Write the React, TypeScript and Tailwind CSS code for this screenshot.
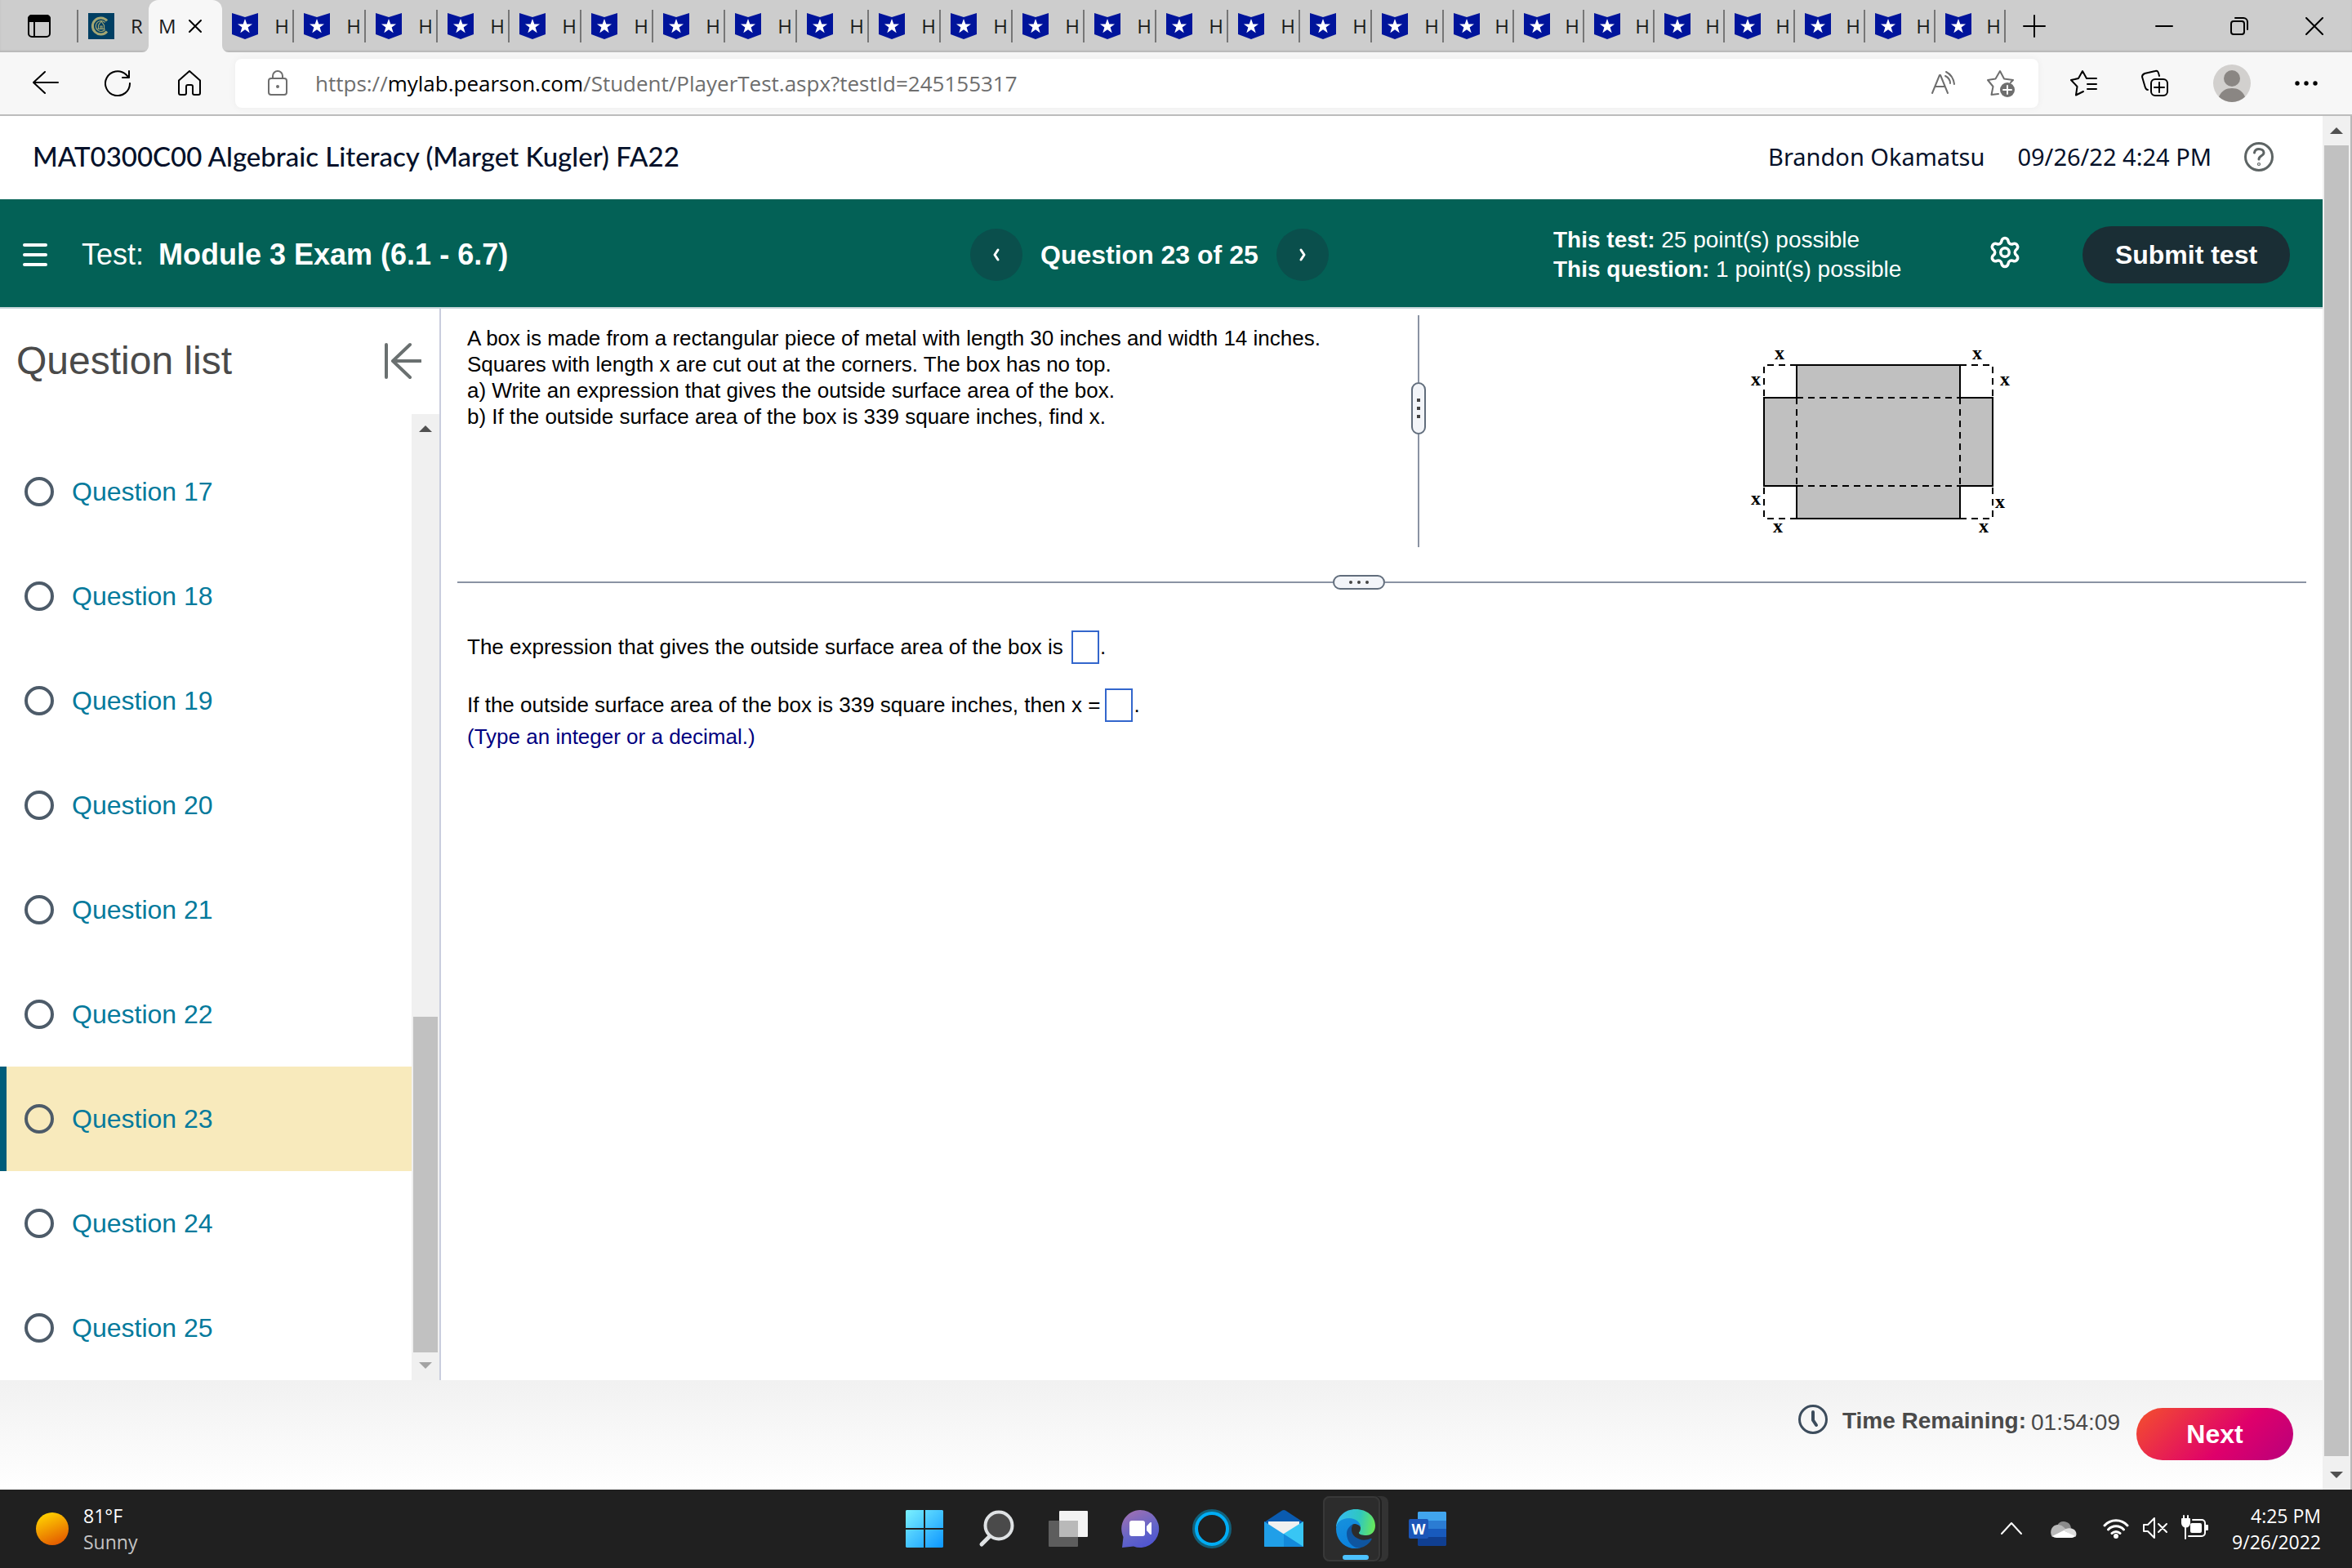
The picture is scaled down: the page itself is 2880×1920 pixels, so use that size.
import type { ReactNode } from "react";
import { Settings } from "lucide-react";

const NARROW_FROM = 17;
const homeworkTabs = Array.from({ length: 25 }, (_, i) => i);
const questions = [17, 18, 19, 20, 21, 22, 23, 24, 25];
const currentQuestion = 23;

function Line({
  children,
  size = 32,
  className = "",
  width = 2,
}: {
  children: ReactNode;
  size?: number;
  className?: string;
  width?: number;
}) {
  return (
    <svg
      width={size}
      height={size}
      viewBox={`0 0 ${size} ${size}`}
      fill="none"
      stroke="currentColor"
      strokeWidth={width}
      strokeLinecap="round"
      strokeLinejoin="round"
      aria-hidden="true"
      className={`shrink-0 ${className}`}
    >
      {children}
    </svg>
  );
}

function StarBadge() {
  return (
    <svg width="32" height="32" viewBox="0 0 32 32" aria-hidden="true" className="shrink-0">
      <path d="M0 0l16 5L32 0v26l-16 6L0 26z" fill="#00149b" />
      <path
        d="M16 7l2.3 6.5h6.7l-5.4 4 2.1 6.8L16 20.3l-5.7 4 2.1-6.8-5.4-4h6.7z"
        fill="#fff"
      />
    </svg>
  );
}

function CollegeBadge() {
  return (
    <svg width="32" height="32" viewBox="0 0 32 32" aria-hidden="true" className="shrink-0">
      <rect width="32" height="32" fill="#003f63" />
      <g fill="none" stroke="#a3a673">
        <path d="M23 9.500A10 10 0 1 0 23 22.500" strokeWidth="3" />
        <path d="M20.500 11.500A6.500 6.500 0 1 0 20.500 20.500" strokeWidth="1.200" />
        <path d="M12.500 19v-4l3.500-5 3.500 5v4M15 19v-3h2v3M11.500 19.500h9" strokeWidth="1.200" />
      </g>
    </svg>
  );
}

function TabStrip() {
  return (
    <div className="flex h-16 items-center bg-[#cdcdcd] text-2xl text-[#1b1b1b] shadow-[inset_0_-2px_2px_rgba(0,0,0,0.1)]">
      <button type="button" aria-label="Tab actions" className="flex w-[94px] justify-center pl-0.5 text-black">
        <Line size={30}>
          <rect x="2" y="2" width="26" height="26" rx="4" />
          <path d="M2 9V6a4 4 0 0 1 4-4h18a4 4 0 0 1 4 4v3z" fill="currentColor" />
          <path d="M9 9v19" />
        </Line>
      </button>
      <span className="h-10 w-[2px] bg-[#767676]" />
      <button type="button" className="flex w-[86px] items-center gap-5 pl-3">
        <CollegeBadge />
        <span>R</span>
      </button>
      <div className="relative flex h-16 w-[90px] items-center gap-3.5 rounded-t-xl bg-[#f7f7f7] pl-3">
        <svg width="8" height="8" aria-hidden="true" className="absolute bottom-0 -left-2">
          <path d="M8 0v8H0a8 8 0 0 0 8-8z" fill="#f7f7f7" />
        </svg>
        <svg width="8" height="8" aria-hidden="true" className="absolute -right-2 bottom-0">
          <path d="M0 0v8h8a8 8 0 0 1-8-8z" fill="#f7f7f7" />
        </svg>
        <span>M</span>
        <button type="button" aria-label="Close tab" className="text-black">
          <Line size={18}>
            <path d="M2 2l14 14M16 2L2 16" />
          </Line>
        </button>
      </div>
      {homeworkTabs.map((i) => (
        <button
          type="button"
          key={i}
          className={
            i < NARROW_FROM
              ? "flex w-[88px] items-center justify-between pl-3"
              : "flex w-[86px] items-center justify-between pl-3"
          }
        >
          <StarBadge />
          <span className="flex items-center gap-1">
            <span>H</span>
            <span className="h-10 w-[2px] bg-[#767676]" />
          </span>
        </button>
      ))}
      <button type="button" aria-label="New tab" className="ml-5 text-black">
        <Line size={30}>
          <path d="M15 2v26M2 15h26" />
        </Line>
      </button>
      <div className="ml-auto flex items-center gap-[70px] pr-[35px] text-black">
        <button type="button" aria-label="Minimize">
          <Line size={22}>
            <path d="M1 11h20" />
          </Line>
        </button>
        <button type="button" aria-label="Restore">
          <Line size={22}>
            <rect x="1" y="5" width="16" height="16" rx="3" />
            <path d="M6 1h10a5 5 0 0 1 5 5v9" />
          </Line>
        </button>
        <button type="button" aria-label="Close">
          <Line size={22}>
            <path d="M1 1l20 20M21 1L1 21" />
          </Line>
        </button>
      </div>
    </div>
  );
}

function AddressRow() {
  return (
    <div className="flex h-[78px] items-center border-b-2 border-[#bcbcbc] bg-[#f7f7f7] text-black">
      <div className="flex w-72 items-center gap-14 pl-10">
        <button type="button" aria-label="Back">
          <Line>
            <path d="M31 15H1M15 2L1 15l14 13" />
          </Line>
        </button>
        <button type="button" aria-label="Refresh">
          <Line>
            <path d="M31 16A15 15 0 1 1 26 5l4 4M30 1v8h-8" />
          </Line>
        </button>
        <button type="button" aria-label="Home">
          <Line>
            <path d="M3 12.500L16 1l13 11.500V28a2 2 0 0 1-2 2h-5a2 2 0 0 1-2-2v-8a2 2 0 0 0-2-2h-4a2 2 0 0 0-2 2v8a2 2 0 0 1-2 2H5a2 2 0 0 1-2-2z" />
          </Line>
        </button>
      </div>
      <div className="flex h-[60px] flex-1 items-center rounded-lg bg-white px-[28px] text-[#6e6e6e] shadow-[0_0_10px_rgba(0,0,0,0.05)]">
        <button type="button" aria-label="Site information" className="pl-2">
          <Line size={32}>
            <rect x="5" y="10" width="22" height="20" rx="3" />
            <path d="M10 10V7a6 6 0 0 1 12 0v3" />
            <circle cx="16" cy="20" r="1" fill="currentColor" />
          </Line>
        </button>
        <div
          role="textbox"
          aria-label="Address"
          contentEditable
          suppressContentEditableWarning
          className="ml-[30px] flex-1 text-[26px] outline-none"
        >
          https://<span className="text-black">mylab.pearson.com</span>
          /Student/PlayerTest.aspx?testId=245155317
        </div>
        <div className="flex gap-9">
          <button type="button" aria-label="Read aloud">
            <Line>
              <path d="M2 28L11 6h1l9 22M6 20h11M19 2c6 3 9 8 10 15M18 7c4 2 6 5 6 9" />
            </Line>
          </button>
          <button type="button" aria-label="Add to favorites">
            <Line size={36}>
              <path d="M15 31l-8.500 1 2-10L2 14l9.500-1.500L17 3l5 9.500L33 14l-3 3" />
              <circle cx="26" cy="26" r="9" fill="currentColor" stroke="none" />
              <path d="M26 21v10M21 26h10" stroke="#fff" />
            </Line>
          </button>
        </div>
      </div>
      <div className="flex items-center gap-[54px] pr-[42px] pl-[38px]">
        <button type="button" aria-label="Favorites">
          <Line size={34}>
            <path d="M17 27l-9 4.500L9.500 21 2 13l9-2 5-9 5 9h12M22 18h11M22 24h11" />
          </Line>
        </button>
        <button type="button" aria-label="Collections">
          <Line size={34}>
            <path d="M8 25C6 25 5 23 4.500 21L1 9c0-2 1-3 3-4l13-3c3-1 4 1 5 6" />
            <rect x="12" y="12" width="20" height="20" rx="5" />
            <path d="M22 16v12M16 22h12" />
          </Line>
        </button>
        <button type="button" aria-label="Profile">
          <svg width="46" height="46" viewBox="0 0 46 46" aria-hidden="true">
            <circle cx="23" cy="23" r="23" fill="#d2d0ce" />
            <circle cx="23" cy="17" r="10" fill="#8a8683" />
            <path d="M7 39.500C10 32 16 29 23 29s13 3 16 10.500A23 23 0 0 1 7 39.500z" fill="#8a8683" />
          </svg>
        </button>
        <button type="button" aria-label="Settings and more">
          <svg width="28" height="6" viewBox="0 0 28 6" aria-hidden="true">
            <circle cx="3" cy="3" r="2.700" />
            <circle cx="14" cy="3" r="2.700" />
            <circle cx="25" cy="3" r="2.700" />
          </svg>
        </button>
      </div>
    </div>
  );
}

function CourseHeader() {
  return (
    <header className="flex h-[102px] items-center bg-white pr-[60px] pb-0.5 pl-10 text-[#05112a]">
      <h1 className="flex-1 font-[Lato] text-[33px] font-medium">
        MAT0300C00 Algebraic Literacy (Marget Kugler) FA22
      </h1>
      <div className="flex items-center gap-10 font-['Noto_Sans'] text-[29px]">
        <span>Brandon Okamatsu</span>
        <span>09/26/22 4:24 PM</span>
        <button type="button" aria-label="Help" className="text-[#5d6464]">
          <Line size={36} width={3}>
            <circle cx="18" cy="18" r="16.500" />
            <path d="M12.500 13c.5-3 3-4.500 5.500-4.500 3.500 0 6 2 6 4.500 0 4-6 3.500-6 8" />
            <circle cx="18" cy="27" r=".6" />
          </Line>
        </button>
      </div>
    </header>
  );
}

function TestBar() {
  return (
    <div className="flex h-[134px] items-center border-b-2 border-[#c7d5d9] bg-[#036156] pt-1 font-['Liberation_Sans'] text-white">
      <div className="flex w-[1188px] items-center pl-7">
        <button type="button" aria-label="Menu" className="flex w-[30px] flex-col gap-2">
          <span className="h-1 w-full rounded-xs bg-white" />
          <span className="h-1 w-full rounded-xs bg-white" />
          <span className="h-1 w-full rounded-xs bg-white" />
        </button>
        <h2 className="ml-[42px] text-4xl">
          Test: <strong className="ml-2">Module 3 Exam (6.1 - 6.7)</strong>
        </h2>
      </div>
      <nav aria-label="Questions" className="flex items-center gap-[22px]">
        <button
          type="button"
          aria-label="Previous question"
          className="flex size-16 items-center justify-center rounded-full bg-[#0a4f4c]"
        >
          <Line size={18} width={3}>
            <path d="M11 3L7 9l4 6" />
          </Line>
        </button>
        <strong className="text-[32px]">Question 23 of 25</strong>
        <button
          type="button"
          aria-label="Next question"
          className="flex size-16 items-center justify-center rounded-full bg-[#0a4f4c]"
        >
          <Line size={18} width={3}>
            <path d="M7 3l4 6-4 6" />
          </Line>
        </button>
      </nav>
      <div className="ml-auto flex items-center pr-10">
        <div className="w-[532px] text-[28px] leading-9">
          <p>
            <strong>This test:</strong> 25 point(s) possible
          </p>
          <p>
            <strong>This question:</strong> 1 point(s) possible
          </p>
        </div>
        <button type="button" aria-label="Settings" className="mr-[74px] mb-1.5">
          <Settings size={42} strokeWidth={2} />
        </button>
        <button type="button" className="h-[70px] w-[254px] rounded-full bg-[#1a2e35] text-[32px] font-bold">
          Submit test
        </button>
      </div>
    </div>
  );
}

function QuestionList() {
  return (
    <aside className="flex w-[540px] flex-col border-r-2 border-[#c9cdde]">
      <div className="flex h-[129px] items-center justify-between pr-[22px] pb-0.5 pl-5">
        <h2 className="text-5xl text-[#4a4a4a]">Question list</h2>
        <button type="button" aria-label="Collapse question list" className="text-[#6a7070]">
          <Line size={46} width={4}>
            <path d="M3 3v40M45 23H11M32 3L11 23l21 20" />
          </Line>
        </button>
      </div>
      <div className="flex flex-1">
        <ul className="flex-1 pt-[31px]">
          {questions.map((n) => (
            <li
              key={n}
              className={
                n === currentQuestion
                  ? "flex h-32 items-center gap-[22px] border-l-8 border-[#005d7a] bg-[#f8eabc] pl-[22px]"
                  : "flex h-32 items-center gap-[22px] pl-[30px]"
              }
            >
              <input
                id={`question-${n}`}
                type="radio"
                name="question"
                className="size-9 appearance-none rounded-full border-4 border-[#4d5b69]"
              />
              <label htmlFor={`question-${n}`} className="text-[32px] text-[#047a9c]">
                Question {n}
              </label>
            </li>
          ))}
        </ul>
        <div className="flex w-[34px] flex-col items-center bg-[#f0f0f0]">
          <svg width="16" height="8" aria-hidden="true" className="mt-3.5">
            <path d="M8 0l8 8H0z" fill="#505050" />
          </svg>
          <div className="flex-1" />
          <div className="h-[411px] w-[30px] bg-[#c1c1c1]" />
          <svg width="16" height="8" aria-hidden="true" className="mt-3 mb-3.5">
            <path d="M0 0h16L8 8z" fill="#a3a3a3" />
          </svg>
        </div>
      </div>
    </aside>
  );
}

// Open box net: the x squares at the corners are cut away.
function BoxNet() {
  return (
    <svg width="310" height="250" viewBox="0 0 310 250" role="img" aria-label="Sheet of metal with corner squares">
      <path d="M60 37h200v40h40v108h-40v40H60v-40H20V77h40z" fill="#c0c0c0" />
      <g fill="none" stroke="#000" strokeWidth="2">
        <path d="M60 77V37h200v40M260 77h40v108h-40M260 185v40H60v-40M60 185H20V77h40" />
        <path
          d="M60 37H20v40M260 37h40v40M60 225H20v-40M260 225h40v-40M60 77h200M60 77v108M260 77v108M60 185h200"
          strokeDasharray="8 6"
        />
      </g>
      <g fontFamily="Liberation Serif, serif" fontSize="24" fontWeight="bold" textAnchor="middle">
        <text x="39" y="30">x</text>
        <text x="281" y="30">x</text>
        <text x="10" y="62">x</text>
        <text x="315" y="62">x</text>
        <text x="10" y="208">x</text>
        <text x="309" y="212">x</text>
        <text x="37" y="242">x</text>
        <text x="289" y="242">x</text>
      </g>
    </svg>
  );
}

function Exercise() {
  return (
    <main className="flex flex-1 flex-col pt-2 pr-5 pl-5 text-[26px] text-black">
      <section className="flex h-[284px]">
        <div className="w-[1157px] pt-3 pl-3 leading-8">
          <p>A box is made from a rectangular piece of metal with length 30 inches and width 14 inches.</p>
          <p>Squares with length x are cut out at the corners. The box has no top.</p>
          <p>a) Write an expression that gives the outside surface area of the box.</p>
          <p>b) If the outside surface area of the box is 339 square inches, find x.</p>
        </div>
        <div className="flex w-[40px] flex-col items-center">
          <div className="h-[82px] w-[2px] bg-[#8a93a3]" />
          <button
            type="button"
            aria-label="Resize columns"
            className="flex h-16 w-[18px] flex-col items-center justify-center gap-1.5 rounded-full border-2 border-[#616d7c] bg-[#f3f5f9]"
          >
            <span className="size-1 bg-[#444]" />
            <span className="size-1 bg-[#444]" />
            <span className="size-1 bg-[#444]" />
          </button>
          <div className="w-[2px] flex-1 bg-[#8a93a3]" />
        </div>
        <div className="flex flex-1 justify-center pt-6 pl-2 [&>svg]:overflow-visible">
          <BoxNet />
        </div>
      </section>
      <div className="mt-[34px] flex items-center">
        <div className="h-[2px] w-[1072px] bg-[#8a93a3]" />
        <button
          type="button"
          aria-label="Resize rows"
          className="flex h-[18px] w-16 items-center justify-center gap-1.5 rounded-full border-2 border-[#616d7c] bg-[#f3f5f9]"
        >
          <span className="size-1 rounded-full bg-[#444]" />
          <span className="size-1 rounded-full bg-[#444]" />
          <span className="size-1 rounded-full bg-[#444]" />
        </button>
        <div className="h-[2px] flex-1 bg-[#8a93a3]" />
      </div>
      <section className="pt-[50px] pl-3">
        <p className="flex items-center">
          <label htmlFor="expression">The expression that gives the outside surface area of the box is</label>
          <input id="expression" type="text" className="mr-px ml-2.5 h-[41px] w-[34px] border-2 border-[#3366cc]" />.
        </p>
        <p className="mt-[30px] flex items-center">
          <label htmlFor="solution">If the outside surface area of the box is 339 square inches, then x =</label>
          <input id="solution" type="text" className="mr-px ml-1.5 h-[41px] w-[34px] border-2 border-[#3366cc]" />.
        </p>
        <p className="leading-9 text-[#000080]">(Type an integer or a decimal.)</p>
      </section>
    </main>
  );
}

function PlayerFooter() {
  return (
    <footer className="flex h-[134px] justify-end bg-linear-to-b from-[#f1f1f1] to-white pt-[30px] pr-9 font-['Liberation_Sans'] text-[28px] text-[#4a4a4a]">
      <Line size={36} width={3} className="text-[#3c4c5c]">
        <circle cx="18" cy="18" r="16.500" />
        <path d="M18 9v10l4 6" strokeWidth="4" />
      </Line>
      <strong className="ml-[18px] leading-10">Time Remaining:</strong>
      <span className="mt-0.5 ml-1.5 leading-10">01:54:09</span>
      <button
        type="button"
        className="mt-1 ml-5 h-16 w-48 rounded-full bg-[linear-gradient(135deg,#f4512c_0%,#df006b_60%,#b8007c_100%)] text-[32px] font-bold text-white"
      >
        Next
      </button>
    </footer>
  );
}

function PageScrollbar() {
  return (
    <div className="flex w-9 flex-col items-center border-r-2 border-[#b8b8b8] bg-[#f0f0f0]">
      <svg width="16" height="8" aria-hidden="true" className="my-3.5">
        <path d="M8 0l8 8H0z" fill="#505050" />
      </svg>
      <div className="w-[30px] flex-1 bg-[#c1c1c1]" />
      <svg width="16" height="8" aria-hidden="true" className="mt-[19px] mb-3.5">
        <path d="M0 0h16L8 8z" fill="#505050" />
      </svg>
    </div>
  );
}

function WindowsIcon() {
  return (
    <svg width="48" height="48" viewBox="0 0 48 48" aria-hidden="true">
      <defs>
        <linearGradient id="win" x1="0" y1="0" x2="48" y2="48" gradientUnits="userSpaceOnUse">
          <stop stopColor="#7df3ff" />
          <stop offset="1" stopColor="#0a94ff" />
        </linearGradient>
      </defs>
      <path d="M2 1h21v22H1V2zM25 1h21l1 1v21H25zM1 25h22v22H2l-1-1zM25 25h22v21l-1 1H25z" fill="url(#win)" />
    </svg>
  );
}

function SearchIcon() {
  return (
    <svg width="48" height="48" viewBox="0 0 48 48" fill="none" stroke="#dfe2e4" aria-hidden="true">
      <path d="M16 33L6 43" strokeWidth="5" strokeLinecap="round" />
      <circle cx="27" cy="20" r="16.500" fill="#4a4a4a" strokeWidth="4" />
    </svg>
  );
}

function TaskViewIcon() {
  return (
    <svg width="48" height="48" viewBox="0 0 48 48" aria-hidden="true">
      <rect x="13" y="2" width="35" height="32" rx="1" fill="#f3f3f3" />
      <rect y="14" width="36" height="32" rx="1" fill="#5d5d5d" />
      <path d="M13 14h23v20H13z" fill="#b9b9b9" />
    </svg>
  );
}

function ChatIcon() {
  return (
    <svg width="48" height="48" viewBox="0 0 48 48" aria-hidden="true">
      <defs>
        <linearGradient id="chat" x1="10" y1="4" x2="30" y2="46" gradientUnits="userSpaceOnUse">
          <stop stopColor="#9b6fb4" />
          <stop offset="0.600" stopColor="#6365c8" />
          <stop offset="1" stopColor="#5055d0" />
        </linearGradient>
      </defs>
      <path d="M24 1a23 23 0 1 1-8 44.500L2 47l1.500-13A23 23 0 0 1 24 1z" fill="url(#chat)" />
      <rect x="11" y="14" width="19" height="19" rx="3" fill="#fff" />
      <path d="M32 21l4-4.500c1-1 2-.5 2 .5v13c0 1-1 1.500-2 .5L32 26z" fill="#fff" />
    </svg>
  );
}

function CortanaIcon() {
  return (
    <svg width="48" height="48" viewBox="0 0 48 48" fill="none" aria-hidden="true">
      <circle cx="24" cy="24" r="22" stroke="#136079" strokeWidth="4" />
      <circle cx="24" cy="24" r="19" stroke="#00adf5" strokeWidth="4" />
    </svg>
  );
}

function MailIcon() {
  return (
    <svg width="48" height="48" viewBox="0 0 48 48" aria-hidden="true">
      <path d="M0 16L22 1.500q2-1 4 0L48 16v8H0z" fill="#0a5bb0" />
      <path d="M5 15h38v8L24 34 5 23z" fill="#f0f0f0" />
      <path d="M48 15v31H0L24 30z" fill="#38c6f4" />
      <path d="M0 15l48 31H1q-1 0-1-1z" fill="#209fe8" />
      <path d="M24 30.500L48 46H24z" fill="#1389da" />
    </svg>
  );
}

function EdgeIcon() {
  return (
    <svg width="48" height="48" viewBox="0 0 48 48" aria-hidden="true">
      <defs>
        <linearGradient id="edgeTop" x1="2" y1="14" x2="48" y2="22" gradientUnits="userSpaceOnUse">
          <stop stopColor="#35bcf0" />
          <stop offset="0.550" stopColor="#2fc7c0" />
          <stop offset="1" stopColor="#6bea55" />
        </linearGradient>
        <linearGradient id="edgeLeft" x1="10" y1="12" x2="24" y2="48" gradientUnits="userSpaceOnUse">
          <stop stopColor="#1590dd" />
          <stop offset="1" stopColor="#0a7fdc" />
        </linearGradient>
      </defs>
      <path
        d="M0 22C1 9 11 0 24 0c14 0 24 9 24 20 0 8-5 12-11 12-5 0-9-1-9-3 0-1 2-2 2-6 0-5-5-10-13-10C9 13 3 16 0 22z"
        fill="url(#edgeTop)"
      />
      <path d="M0 24C0 16 7 11 16 11c8 0 14 5 14 11-2-3-5-4-7-4-5 0-8 6-8 12 0 9 7 17 15 18C14 51 0 40 0 24z" fill="url(#edgeLeft)" />
      <path d="M21 18.500C15 21 13 26 13 30c0 9 7 18 16 17.500C36 46 41 42 43.500 37c.5-1-.5-1.500-1.500-1C31 41 18 34 19 24c0-2 1-4 2-5.500z" fill="#0f559f" />
    </svg>
  );
}

function WordIcon() {
  return (
    <svg width="48" height="48" viewBox="0 0 48 48" aria-hidden="true">
      <path d="M13 3h33l1 1v10H12V4z" fill="#41a5ee" />
      <path d="M12 14h35v11H12z" fill="#2b7cd3" />
      <path d="M12 24h35v11H12z" fill="#185abd" />
      <path d="M12 34h35v10l-1 1H13l-1-1z" fill="#103f91" />
      <rect x="1" y="12" width="24" height="24" rx="2" fill="#1b56b8" />
      <text x="13" y="31" fill="#fff" fontFamily="Liberation Sans, sans-serif" fontSize="18" fontWeight="bold" textAnchor="middle">
        W
      </text>
    </svg>
  );
}

function Taskbar() {
  const cell = "flex w-[88px] items-center justify-center";
  return (
    <div className="grid h-24 grid-cols-[1fr_auto_1fr] bg-[#202020] text-[23px] leading-8 text-white">
      <button type="button" className="flex items-center gap-[18px] pl-11 text-left">
        <svg width="40" height="40" viewBox="0 0 40 40" aria-hidden="true">
          <defs>
            <linearGradient id="sun" x1="10" y1="2" x2="26" y2="40" gradientUnits="userSpaceOnUse">
              <stop stopColor="#ffd000" />
              <stop offset="1" stopColor="#e35a00" />
            </linearGradient>
          </defs>
          <circle cx="20" cy="20" r="20" fill="url(#sun)" />
        </svg>
        <span>
          <span className="block">81°F</span>
          <span className="block text-[#c4c4c4]">Sunny</span>
        </span>
      </button>
      <div className="flex">
        <button type="button" aria-label="Start" className={cell}>
          <WindowsIcon />
        </button>
        <button type="button" aria-label="Search" className={cell}>
          <SearchIcon />
        </button>
        <button type="button" aria-label="Task view" className={cell}>
          <TaskViewIcon />
        </button>
        <button type="button" aria-label="Chat" className={cell}>
          <ChatIcon />
        </button>
        <button type="button" aria-label="Cortana" className={cell}>
          <CortanaIcon />
        </button>
        <button type="button" aria-label="Mail" className={cell}>
          <MailIcon />
        </button>
        <button type="button" aria-label="Edge" className={cell}>
          <span className="block w-20 rounded-lg bg-[#333]">
            <span className="relative flex h-20 w-[70px] items-center rounded-lg border-2 border-[#383838] bg-[#2c2c2c] pl-3.5 shadow-[2px_0_0_#202020]">
              <EdgeIcon />
              <span className="absolute bottom-0 left-[22px] h-1.5 w-8 rounded-full bg-[#4cc2ff]" />
            </span>
          </span>
        </button>
        <button type="button" aria-label="Word" className={cell}>
          <WordIcon />
        </button>
      </div>
      <div className="flex items-center justify-end pr-[38px]">
        <button type="button" aria-label="Show hidden icons" className="mr-[34px]">
          <Line size={28}>
            <path d="M2 20L14 7l12 13" />
          </Line>
        </button>
        <button type="button" aria-label="OneDrive" className="mr-8">
          <svg width="32" height="24" viewBox="0 0 32 24" aria-hidden="true">
            <path d="M8 8a9 9 0 0 1 17 3l-9 5L5 11z" fill="#8b8b8b" />
            <path d="M8 7c4 0 6 1 8 3l4 4L2 22C-2 16 1 8 8 7z" fill="#b9b9b9" />
            <path d="M16 14c3-4 13-4 15 2 1 3 0 5-1 6z" fill="#dedede" />
            <path d="M2 21l14-7 14 7q-2 2-4 2H7q-3 0-5-2z" fill="#fff" />
          </svg>
        </button>
        <button type="button" aria-label="Network, volume and battery" className="mr-7 flex gap-4">
          <Line size={32} width={3}>
            <path d="M2 13a19 19 0 0 1 28 0M6.500 18a13 13 0 0 1 19 0M11 22.500a7 7 0 0 1 10 0" />
            <circle cx="16" cy="26" r="1.500" fill="currentColor" />
          </Line>
          <Line size={32}>
            <path d="M2 12h5l8-8v24l-8-8H2zM20 11l10 10M30 11L20 21" />
          </Line>
          <Line size={34}>
            <path d="M14 6h11a4 4 0 0 1 4 4v12a4 4 0 0 1-4 4H9M5 14v15M3 1v4M8 1v4" />
            <path d="M1 5h9v5a4 4 0 0 1-9 0z" fill="currentColor" />
            <rect x="12" y="11" width="12" height="10" rx="1" fill="currentColor" />
            <path d="M30 13h2v5h-2z" fill="currentColor" />
          </Line>
        </button>
        <button type="button" className="text-right">
          <span className="block">4:25 PM</span>
          <span className="block">9/26/2022</span>
        </button>
      </div>
    </div>
  );
}

export default function App() {
  return (
    <div className="flex min-h-screen flex-col bg-white font-['Open_Sans',sans-serif]">
      <TabStrip />
      <AddressRow />
      <div className="flex flex-1">
        <div className="flex flex-1 flex-col">
          <CourseHeader />
          <TestBar />
          <div className="flex flex-1 font-['Liberation_Sans',sans-serif]">
            <QuestionList />
            <Exercise />
          </div>
          <PlayerFooter />
        </div>
        <PageScrollbar />
      </div>
      <Taskbar />
    </div>
  );
}
